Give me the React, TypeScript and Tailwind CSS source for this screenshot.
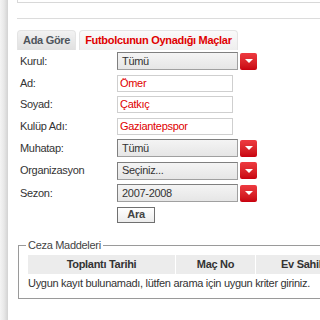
export default function App() {
  const rows: { label: string; kind: "select" | "input"; value: string; h: string }[] = [
    { label: "Kurul:", kind: "select", value: "Tümü", h: "h-[22px]" },
    { label: "Ad:", kind: "input", value: "Ömer", h: "h-[22px]" },
    { label: "Soyad:", kind: "input", value: "Çatkıç", h: "h-[21px]" },
    { label: "Kulüp Adı:", kind: "input", value: "Gaziantepspor", h: "h-[22px]" },
    { label: "Muhatap:", kind: "select", value: "Tümü", h: "h-[22px]" },
    { label: "Organizasyon", kind: "select", value: "Seçiniz...", h: "h-[23px]" },
    { label: "Sezon:", kind: "select", value: "2007-2008", h: "h-[22px]" },
  ];

  return (
    <div className="w-[320px] h-[320px] overflow-hidden flex bg-white font-['Liberation_Sans',sans-serif] text-[11px] leading-[13px] tracking-[-0.3px] text-[#333]">
      {/* left shadow strip */}
      <div className="w-[8px] shrink-0 bg-gradient-to-r from-[#f4f4f4] via-[#e8e8e8] to-[#d2d2d2]" />

      <div className="flex-1 pl-[9px] min-w-0">
        <div className="h-[3px] border-b border-l border-[#d8d8d8]" />
        <div className="mt-[15px] border-t border-[#dcdcdc]" />

        {/* tabs */}
        <div className="mt-[11px] flex gap-[3px] h-[20px]">
          <div className="px-[5px] rounded-t-[4px] bg-gradient-to-b from-[#f2f2f2] to-[#e0e0e0] border-t border-l border-r border-[#e4e4e4] flex items-center font-bold text-[#4f555c]">
            Ada Göre
          </div>
          <div className="px-[5px] rounded-t-[4px] bg-gradient-to-b from-[#fafafa] to-[#eeeeee] border-t border-l border-r border-[#e4e4e4] flex items-center font-bold text-[#e00000]">
            Futbolcunun Oynadığı Maçlar
          </div>
        </div>

        {/* form */}
        <div className="pl-[3px]">
          {rows.map((r) => (
            <div key={r.label} className={`flex items-center ${r.h}`}>
              <div className="w-[97px] shrink-0">{r.label}</div>
              {r.kind === "select" ? (
                <div className="flex items-center gap-[2px]">
                  <div className="w-[121px] h-[18px] border border-[#7f7f7f] border-r-[#a0a0a0] border-b-[#a0a0a0] bg-gradient-to-b from-[#f4f4f4] to-[#e6e6e6] pl-[4px] flex items-center">
                    {r.value}
                  </div>
                  <div className="w-[17px] h-[17px] rounded-[2px] bg-gradient-to-b from-[#ee3a40] to-[#c8000e] flex items-center justify-center">
                    <div className="w-0 h-0 border-l-[4px] border-r-[4px] border-t-[4px] border-l-transparent border-r-transparent border-t-white" />
                  </div>
                </div>
              ) : (
                <div className="w-[116px] h-[17px] border border-[#cfcfcf] pl-[2px] flex items-center text-[#e00000]">
                  {r.value}
                </div>
              )}
            </div>
          ))}
          <div className="flex items-center h-[21px]">
            <div className="w-[97px] shrink-0" />
            <div className="w-[38px] h-[16px] border border-[#707070] bg-gradient-to-b from-white to-[#ececec] flex items-center justify-center font-bold text-[#444]">
              Ara
            </div>
          </div>
        </div>

        {/* fieldset */}
        <fieldset className="mt-[14px] ml-[1px] w-[336px] border border-[#9a9a9a] pl-[9px] pb-[5px]">
          <legend className="ml-[-2px] px-[2px] text-[#444]">Ceza Maddeleri</legend>
          <div className="mt-[3px] flex h-[19px] bg-[#ececec] font-bold text-[#333]">
            <div className="w-[148px] shrink-0 flex items-center justify-center border-r border-white">Toplantı Tarihi</div>
            <div className="w-[80px] shrink-0 flex items-center justify-center border-r border-white">Maç No</div>
            <div className="flex-1 flex items-center justify-center">Ev Sahibi</div>
          </div>
          <div className="h-[19px] flex items-center whitespace-nowrap">
            Uygun kayıt bulunamadı, lütfen arama için uygun kriter giriniz.
          </div>
        </fieldset>
      </div>
    </div>
  );
}
